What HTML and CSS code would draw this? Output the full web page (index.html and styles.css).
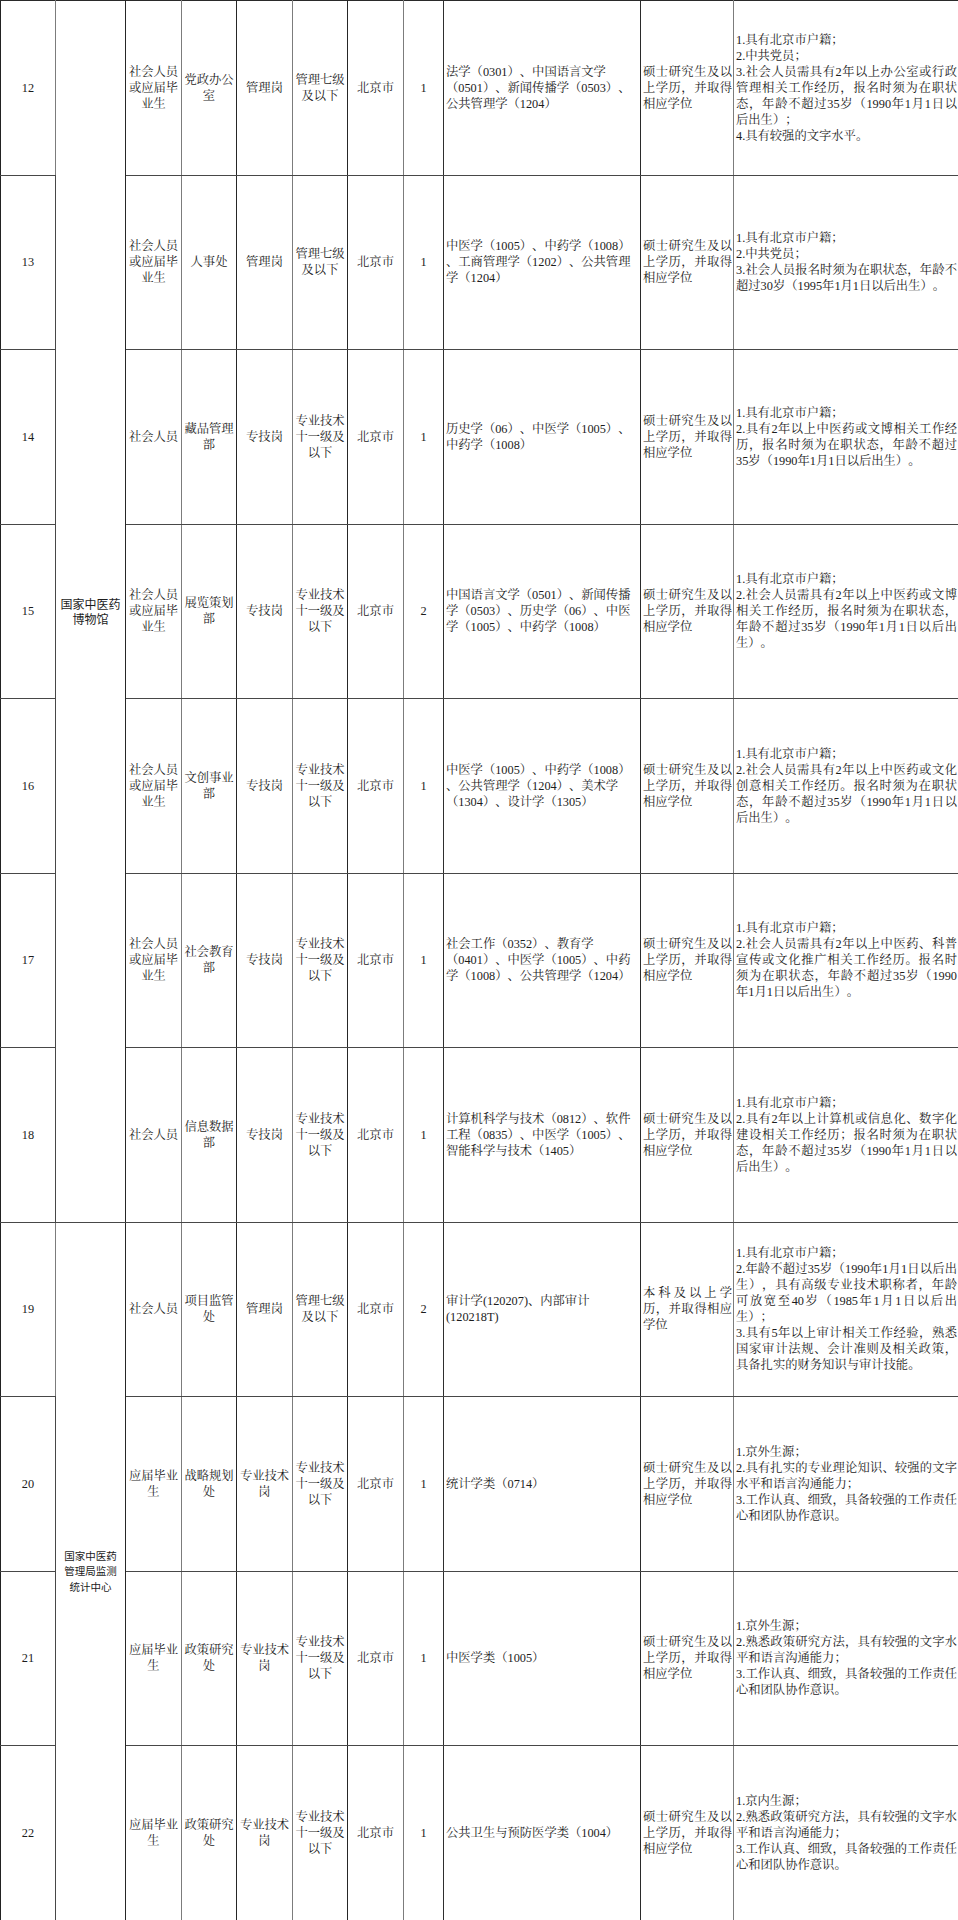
FILE: index.html
```html
<!DOCTYPE html>
<html lang="zh-CN">
<head>
<meta charset="utf-8">
<title>岗位表</title>
<link rel="stylesheet" href="styles.css">
</head>
<body>
<table class="jobs">
  <colgroup>
    <col class="w-no"><col class="w-org"><col class="w-type"><col class="w-dept"><col class="w-cat"><col class="w-level"><col class="w-loc"><col class="w-num"><col class="w-major"><col class="w-degree"><col class="w-req">
  </colgroup>
  <tbody>
    <tr>
      <td class="no">12</td>
      <td class="org" rowspan="7">国家中医药<br>博物馆</td>
      <td class="type">社会人员<br>或应届毕<br>业生</td>
      <td class="dept">党政办公<br>室</td>
      <td class="cat">管理岗</td>
      <td class="level">管理七级<br>及以下</td>
      <td class="loc">北京市</td>
      <td class="num">1</td>
      <td class="major">法学（0301）、中国语言文学<br>（0501）、新闻传播学（0503）、<br>公共管理学（1204）</td>
      <td class="degree"><span class="ln jf">硕士研究生及以</span><span class="ln jf">上学历，并取得</span><span class="ln">相应学位</span></td>
      <td class="req"><span class="ln">1.具有北京市户籍；</span><span class="ln">2.中共党员；</span><span class="ln jf">3.社会人员需具有2年以上办公室或行政</span><span class="ln jf">管理相关工作经历，报名时须为在职状</span><span class="ln jf">态，年龄不超过35岁（1990年1月1日以</span><span class="ln">后出生）；</span><span class="ln">4.具有较强的文字水平。</span></td>
    </tr>
    <tr>
      <td class="no">13</td>
      <td class="type">社会人员<br>或应届毕<br>业生</td>
      <td class="dept">人事处</td>
      <td class="cat">管理岗</td>
      <td class="level">管理七级<br>及以下</td>
      <td class="loc">北京市</td>
      <td class="num">1</td>
      <td class="major">中医学（1005）、中药学（1008）<br>、工商管理学（1202）、公共管理<br>学（1204）</td>
      <td class="degree"><span class="ln jf">硕士研究生及以</span><span class="ln jf">上学历，并取得</span><span class="ln">相应学位</span></td>
      <td class="req"><span class="ln">1.具有北京市户籍；</span><span class="ln">2.中共党员；</span><span class="ln jf">3.社会人员报名时须为在职状态，年龄不</span><span class="ln">超过30岁（1995年1月1日以后出生）。</span></td>
    </tr>
    <tr>
      <td class="no">14</td>
      <td class="type">社会人员</td>
      <td class="dept">藏品管理<br>部</td>
      <td class="cat">专技岗</td>
      <td class="level">专业技术<br>十一级及<br>以下</td>
      <td class="loc">北京市</td>
      <td class="num">1</td>
      <td class="major">历史学（06）、中医学（1005）、<br>中药学（1008）</td>
      <td class="degree"><span class="ln jf">硕士研究生及以</span><span class="ln jf">上学历，并取得</span><span class="ln">相应学位</span></td>
      <td class="req"><span class="ln">1.具有北京市户籍；</span><span class="ln jf">2.具有2年以上中医药或文博相关工作经</span><span class="ln jf">历，报名时须为在职状态，年龄不超过</span><span class="ln">35岁（1990年1月1日以后出生）。</span></td>
    </tr>
    <tr>
      <td class="no">15</td>
      <td class="type">社会人员<br>或应届毕<br>业生</td>
      <td class="dept">展览策划<br>部</td>
      <td class="cat">专技岗</td>
      <td class="level">专业技术<br>十一级及<br>以下</td>
      <td class="loc">北京市</td>
      <td class="num">2</td>
      <td class="major">中国语言文学（0501）、新闻传播<br>学（0503）、历史学（06）、中医<br>学（1005）、中药学（1008）</td>
      <td class="degree"><span class="ln jf">硕士研究生及以</span><span class="ln jf">上学历，并取得</span><span class="ln">相应学位</span></td>
      <td class="req"><span class="ln">1.具有北京市户籍；</span><span class="ln jf">2.社会人员需具有2年以上中医药或文博</span><span class="ln jf">相关工作经历，报名时须为在职状态，</span><span class="ln jf">年龄不超过35岁（1990年1月1日以后出</span><span class="ln">生）。</span></td>
    </tr>
    <tr>
      <td class="no">16</td>
      <td class="type">社会人员<br>或应届毕<br>业生</td>
      <td class="dept">文创事业<br>部</td>
      <td class="cat">专技岗</td>
      <td class="level">专业技术<br>十一级及<br>以下</td>
      <td class="loc">北京市</td>
      <td class="num">1</td>
      <td class="major">中医学（1005）、中药学（1008）<br>、公共管理学（1204）、美术学<br>（1304）、设计学（1305）</td>
      <td class="degree"><span class="ln jf">硕士研究生及以</span><span class="ln jf">上学历，并取得</span><span class="ln">相应学位</span></td>
      <td class="req"><span class="ln">1.具有北京市户籍；</span><span class="ln jf">2.社会人员需具有2年以上中医药或文化</span><span class="ln jf">创意相关工作经历。报名时须为在职状</span><span class="ln jf">态，年龄不超过35岁（1990年1月1日以</span><span class="ln">后出生）。</span></td>
    </tr>
    <tr>
      <td class="no">17</td>
      <td class="type">社会人员<br>或应届毕<br>业生</td>
      <td class="dept">社会教育<br>部</td>
      <td class="cat">专技岗</td>
      <td class="level">专业技术<br>十一级及<br>以下</td>
      <td class="loc">北京市</td>
      <td class="num">1</td>
      <td class="major">社会工作（0352）、教育学<br>（0401）、中医学（1005）、中药<br>学（1008）、公共管理学（1204）</td>
      <td class="degree"><span class="ln jf">硕士研究生及以</span><span class="ln jf">上学历，并取得</span><span class="ln">相应学位</span></td>
      <td class="req"><span class="ln">1.具有北京市户籍；</span><span class="ln jf">2.社会人员需具有2年以上中医药、科普</span><span class="ln jf">宣传或文化推广相关工作经历。报名时</span><span class="ln jf">须为在职状态，年龄不超过35岁（1990</span><span class="ln">年1月1日以后出生）。</span></td>
    </tr>
    <tr>
      <td class="no">18</td>
      <td class="type">社会人员</td>
      <td class="dept">信息数据<br>部</td>
      <td class="cat">专技岗</td>
      <td class="level">专业技术<br>十一级及<br>以下</td>
      <td class="loc">北京市</td>
      <td class="num">1</td>
      <td class="major">计算机科学与技术（0812）、软件<br>工程（0835）、中医学（1005）、<br>智能科学与技术（1405）</td>
      <td class="degree"><span class="ln jf">硕士研究生及以</span><span class="ln jf">上学历，并取得</span><span class="ln">相应学位</span></td>
      <td class="req"><span class="ln">1.具有北京市户籍；</span><span class="ln jf">2.具有2年以上计算机或信息化、数字化</span><span class="ln jf">建设相关工作经历；报名时须为在职状</span><span class="ln jf">态，年龄不超过35岁（1990年1月1日以</span><span class="ln">后出生）。</span></td>
    </tr>
    <tr>
      <td class="no">19</td>
      <td class="org org-sm" rowspan="4">国家中医药<br>管理局监测<br>统计中心</td>
      <td class="type">社会人员</td>
      <td class="dept">项目监管<br>处</td>
      <td class="cat">管理岗</td>
      <td class="level">管理七级<br>及以下</td>
      <td class="loc">北京市</td>
      <td class="num">2</td>
      <td class="major">审计学(120207)、内部审计<br>(120218T)</td>
      <td class="degree"><span class="ln jf">本科及以上学</span><span class="ln jf">历，并取得相应</span><span class="ln">学位</span></td>
      <td class="req"><span class="ln">1.具有北京市户籍；</span><span class="ln jf">2.年龄不超过35岁（1990年1月1日以后出</span><span class="ln jf">生），具有高级专业技术职称者，年龄</span><span class="ln jf">可放宽至40岁（1985年1月1日以后出</span><span class="ln">生）；</span><span class="ln jf">3.具有5年以上审计相关工作经验，熟悉</span><span class="ln jf">国家审计法规、会计准则及相关政策，</span><span class="ln">具备扎实的财务知识与审计技能。</span></td>
    </tr>
    <tr>
      <td class="no">20</td>
      <td class="type">应届毕业<br>生</td>
      <td class="dept">战略规划<br>处</td>
      <td class="cat">专业技术<br>岗</td>
      <td class="level">专业技术<br>十一级及<br>以下</td>
      <td class="loc">北京市</td>
      <td class="num">1</td>
      <td class="major">统计学类（0714）</td>
      <td class="degree"><span class="ln jf">硕士研究生及以</span><span class="ln jf">上学历，并取得</span><span class="ln">相应学位</span></td>
      <td class="req"><span class="ln">1.京外生源；</span><span class="ln jf">2.具有扎实的专业理论知识、较强的文字</span><span class="ln">水平和语言沟通能力；</span><span class="ln jf">3.工作认真、细致，具备较强的工作责任</span><span class="ln">心和团队协作意识。</span></td>
    </tr>
    <tr>
      <td class="no">21</td>
      <td class="type">应届毕业<br>生</td>
      <td class="dept">政策研究<br>处</td>
      <td class="cat">专业技术<br>岗</td>
      <td class="level">专业技术<br>十一级及<br>以下</td>
      <td class="loc">北京市</td>
      <td class="num">1</td>
      <td class="major">中医学类（1005）</td>
      <td class="degree"><span class="ln jf">硕士研究生及以</span><span class="ln jf">上学历，并取得</span><span class="ln">相应学位</span></td>
      <td class="req"><span class="ln">1.京外生源；</span><span class="ln jf">2.熟悉政策研究方法，具有较强的文字水</span><span class="ln">平和语言沟通能力；</span><span class="ln jf">3.工作认真、细致，具备较强的工作责任</span><span class="ln">心和团队协作意识。</span></td>
    </tr>
    <tr>
      <td class="no">22</td>
      <td class="type">应届毕业<br>生</td>
      <td class="dept">政策研究<br>处</td>
      <td class="cat">专业技术<br>岗</td>
      <td class="level">专业技术<br>十一级及<br>以下</td>
      <td class="loc">北京市</td>
      <td class="num">1</td>
      <td class="major">公共卫生与预防医学类（1004）</td>
      <td class="degree"><span class="ln jf">硕士研究生及以</span><span class="ln jf">上学历，并取得</span><span class="ln">相应学位</span></td>
      <td class="req"><span class="ln">1.京内生源；</span><span class="ln jf">2.熟悉政策研究方法，具有较强的文字水</span><span class="ln">平和语言沟通能力；</span><span class="ln jf">3.工作认真、细致，具备较强的工作责任</span><span class="ln">心和团队协作意识。</span></td>
    </tr>
  </tbody>
</table>
</body>
</html>
```
FILE: styles.css
```css
html, body {
  margin: 0;
  padding: 0;
  background: #ffffff;
}

.jobs {
  border-collapse: collapse;
  table-layout: fixed;
  width: 958px;
  font-family: "Liberation Serif", "Noto Serif CJK SC", "Noto Sans CJK SC", serif;
  font-size: 12.3px;
  line-height: 16px;
  color: #1c1c1c;
  text-spacing-trim: space-all;
}

.w-no { width: 55px; }
.w-org { width: 70px; }
.w-type { width: 56px; }
.w-dept { width: 55px; }
.w-cat { width: 56px; }
.w-level { width: 55px; }
.w-loc { width: 56px; }
.w-num { width: 40px; }
.w-major { width: 197px; }
.w-degree { width: 93px; }
.w-req { width: 225px; }

.jobs tr {
  height: 174.5px;
}

.jobs td {
  border: 1px solid #474747;
  padding: 0 1px;
  vertical-align: middle;
  text-align: center;
  white-space: nowrap;
  overflow: hidden;
}

/* vertical rule colours: alternating dark / light as in the scan */
.jobs td.no { border-left-color: #222222; border-right-color: #7c7c7c; }
.jobs td.org { border-right-color: #262626; }
.jobs td.type { border-right-color: #7c7c7c; }
.jobs td.dept { border-right-color: #262626; }
.jobs td.cat { border-right-color: #7c7c7c; }
.jobs td.level { border-right-color: #262626; }
.jobs td.loc { border-right-color: #7c7c7c; }
.jobs td.num { border-right-color: #2e2e2e; }
.jobs td.major { border-right-color: #2a2a2a; }
.jobs td.degree { border-right-color: #7c7c7c; }
.jobs td.req { border-right-color: #2a2a2a; }

.jobs tr:first-child td { border-top-color: #2a2a2a; }

.jobs td.org {
  font-family: "Noto Sans CJK SC", sans-serif;
  font-size: 12px;
  line-height: 15.5px;
}

.jobs td.org-sm {
  font-size: 10.5px;
  line-height: 15.5px;
}

.jobs td.major,
.jobs td.degree,
.jobs td.req {
  text-align: left;
}

.jobs td.major { padding: 0 2px; }
.jobs td.degree { padding: 0 1px 0 2px; }
.jobs td.req { padding: 0 1px 0 2px; }

.ln {
  display: block;
}

.ln.jf {
  text-align: justify;
  text-align-last: justify;
}
```
